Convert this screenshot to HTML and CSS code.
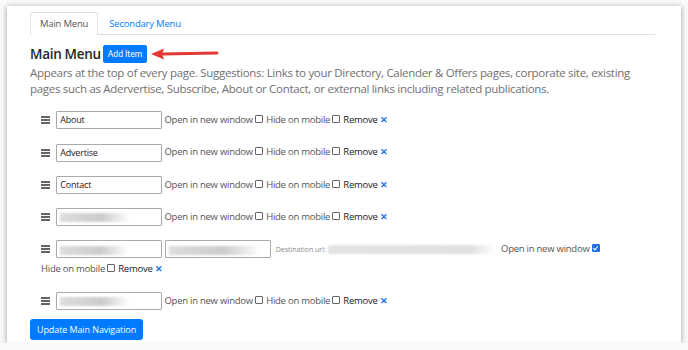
FILE: index.html
```html
<!DOCTYPE html>
<html>
<head>
  <meta charset="utf-8">
  <title>Navigation</title>
  <link rel="stylesheet" href="styles.css">
</head>
<body>
  <div class="card">
    <ul class="tabs">
      <li class="tab active">Main Menu</li>
      <li class="tab">Secondary Menu</li>
    </ul>

    <h2 class="title">Main Menu <span class="btn-small">Add Item</span>
      <svg class="arrow" width="70" height="14" viewBox="0 0 70 14">
        <path d="M12 7 L67 6" stroke="#e53935" stroke-width="3" stroke-linecap="round" fill="none"/>
        <path d="M1 7 L14 1.5 L12 7 L14 12.5 Z" fill="#e53935"/>
      </svg>
    </h2>
    <p class="lead">Appears at the top of every page. Suggestions: Links to your Directory, Calender &amp; Offers pages, corporate site, existing pages such as Adervertise, Subscribe, About or Contact, or external links including related publications.</p>

    <div class="items">
      <div class="item">
        <svg class="handle" width="9" height="8" viewBox="0 0 9 8"><path d="M0 1h9M0 4h9M0 7h9" stroke="#333" stroke-width="1.5"/></svg>
        <span class="field">About</span>
        <span class="opt">Open in new window</span><span class="check"></span>
        <span class="opt">Hide on mobile</span><span class="check"></span>
        <span class="remove">Remove <b>✕</b></span>
      </div>
      <div class="item">
        <svg class="handle" width="9" height="8" viewBox="0 0 9 8"><path d="M0 1h9M0 4h9M0 7h9" stroke="#333" stroke-width="1.5"/></svg>
        <span class="field">Advertise</span>
        <span class="opt">Open in new window</span><span class="check"></span>
        <span class="opt">Hide on mobile</span><span class="check"></span>
        <span class="remove">Remove <b>✕</b></span>
      </div>
      <div class="item">
        <svg class="handle" width="9" height="8" viewBox="0 0 9 8"><path d="M0 1h9M0 4h9M0 7h9" stroke="#333" stroke-width="1.5"/></svg>
        <span class="field">Contact</span>
        <span class="opt">Open in new window</span><span class="check"></span>
        <span class="opt">Hide on mobile</span><span class="check"></span>
        <span class="remove">Remove <b>✕</b></span>
      </div>
      <div class="item">
        <svg class="handle" width="9" height="8" viewBox="0 0 9 8"><path d="M0 1h9M0 4h9M0 7h9" stroke="#333" stroke-width="1.5"/></svg>
        <span class="field"><span class="blur w55"></span></span>
        <span class="opt">Open in new window</span><span class="check"></span>
        <span class="opt">Hide on mobile</span><span class="check"></span>
        <span class="remove">Remove <b>✕</b></span>
      </div>
      <div class="item">
        <svg class="handle" width="9" height="8" viewBox="0 0 9 8"><path d="M0 1h9M0 4h9M0 7h9" stroke="#333" stroke-width="1.5"/></svg>
        <span class="field"><span class="blur w70"></span></span>
        <span class="field"><span class="blur w95"></span></span>
        <span class="dest">Destination url:</span><span class="blur url"></span>
        <span class="opt">Open in new window</span><span class="check on"></span>
        <span class="opt">Hide on mobile</span><span class="check"></span>
        <span class="remove">Remove <b>✕</b></span>
      </div>
      <div class="item">
        <svg class="handle" width="9" height="8" viewBox="0 0 9 8"><path d="M0 1h9M0 4h9M0 7h9" stroke="#333" stroke-width="1.5"/></svg>
        <span class="field"><span class="blur w55"></span></span>
        <span class="opt">Open in new window</span><span class="check"></span>
        <span class="opt">Hide on mobile</span><span class="check"></span>
        <span class="remove">Remove <b>✕</b></span>
      </div>
    </div>

    <button class="btn">Update Main Navigation</button>
  </div>
</body>
</html>
```

FILE: styles.css
```css
body {
  margin: 0;
  padding: 6px 7px 0 7px;
  background: #fafafa;
  font-family: "Open Sans", "Liberation Sans", sans-serif;
  color: #212529;
}

.card {
  width: 674px;
  height: 337px;
  box-sizing: border-box;
  background: #fff;
  padding: 6px 26px 0 23px;
  box-shadow: 0 1px 6px rgba(0, 0, 0, 0.38);
}

.tabs {
  display: flex;
  list-style: none;
  margin: 0;
  padding: 0;
  border-bottom: 1px solid #dee2e6;
}
.tab {
  font-size: 9.5px;
  letter-spacing: -0.2px;
  line-height: 22px;
  padding: 0 9px;
  color: #007bff;
  border: 1px solid transparent;
  border-bottom: 0;
  margin-bottom: -1px;
}
.tab.active {
  color: #555;
  background: #fff;
  border-color: #dee2e6;
  border-radius: 3px 3px 0 0;
  margin-right: 1px;
}

.title {
  display: flex;
  align-items: center;
  margin: 9px 0 0 0;
  font-size: 13.5px;
  letter-spacing: -0.3px;
  font-weight: 600;
  line-height: 20px;
}
.btn-small {
  margin-left: 2px;
  background: #007bff;
  color: #fff;
  font-family: Roboto, sans-serif;
  font-weight: 400;
  font-size: 8.5px;
  letter-spacing: 0;
  line-height: 18px;
  padding: 0 5px;
  border-radius: 2px;
}
.arrow {
  margin-left: 3px;
}

.lead {
  margin: 1px 0 0 0;
  font-size: 11.5px;
  letter-spacing: -0.3px;
  line-height: 16px;
  color: #707070;
}

.items {
  margin-top: 13px;
  padding-left: 11px;
}
.item {
  font-size: 9.5px;
  letter-spacing: -0.25px;
  line-height: 19px;
  color: #555;
  margin-bottom: 12.8px;
}
.item:last-child {
  margin-bottom: 9px;
}
.opt {
  white-space: nowrap;
}

.handle {
  vertical-align: middle;
  margin-right: 4px;
}

.field {
  display: inline-block;
  box-sizing: border-box;
  width: 106px;
  height: 18px;
  border: 1px solid #aaa;
  border-radius: 1px;
  padding: 0 3px;
  font-size: 9px;
  letter-spacing: -0.2px;
  line-height: 16px;
  color: #222;
  vertical-align: middle;
}
.field + .field {
  margin-left: 1px;
}

.blur {
  display: inline-block;
  height: 9px;
  vertical-align: middle;
  background: linear-gradient(90deg, #ddd, #ccc 60%, rgba(220, 220, 220, 0));
  filter: blur(1px);
}
.w55 { width: 70px; }
.w70 { width: 68px; }
.w95 { width: 92px; }
.blur.url {
  width: 168px;
  margin: 0 3px 0 2px;
  background: linear-gradient(90deg, #e4e4e4, #e0e0e0 85%, rgba(230, 230, 230, 0));
}

.dest {
  font-size: 7px;
  letter-spacing: 0;
  color: #888;
  margin-left: 2px;
}

.check {
  display: inline-block;
  box-sizing: border-box;
  width: 8px;
  height: 8px;
  border: 1px solid #666;
  border-radius: 1px;
  margin: 0 1px 0 2px;
  vertical-align: 0;
}
.check.on {
  background: #1e6fd9;
  border-color: #1e6fd9;
  position: relative;
}
.check.on::after {
  content: "";
  position: absolute;
  left: 1.5px;
  top: 0;
  width: 2px;
  height: 4px;
  border: solid #fff;
  border-width: 0 1.2px 1.2px 0;
  transform: rotate(40deg);
}

.remove {
  color: #222;
}
.remove b {
  color: #1a73e8;
  font-size: 9px;
  font-weight: 900;
}

.btn {
  display: block;
  background: #007bff;
  color: #fff;
  border: 0;
  border-radius: 3px;
  font-family: "Open Sans", sans-serif;
  font-size: 9px;
  letter-spacing: -0.1px;
  line-height: 21px;
  padding: 0 7px;
}
```
